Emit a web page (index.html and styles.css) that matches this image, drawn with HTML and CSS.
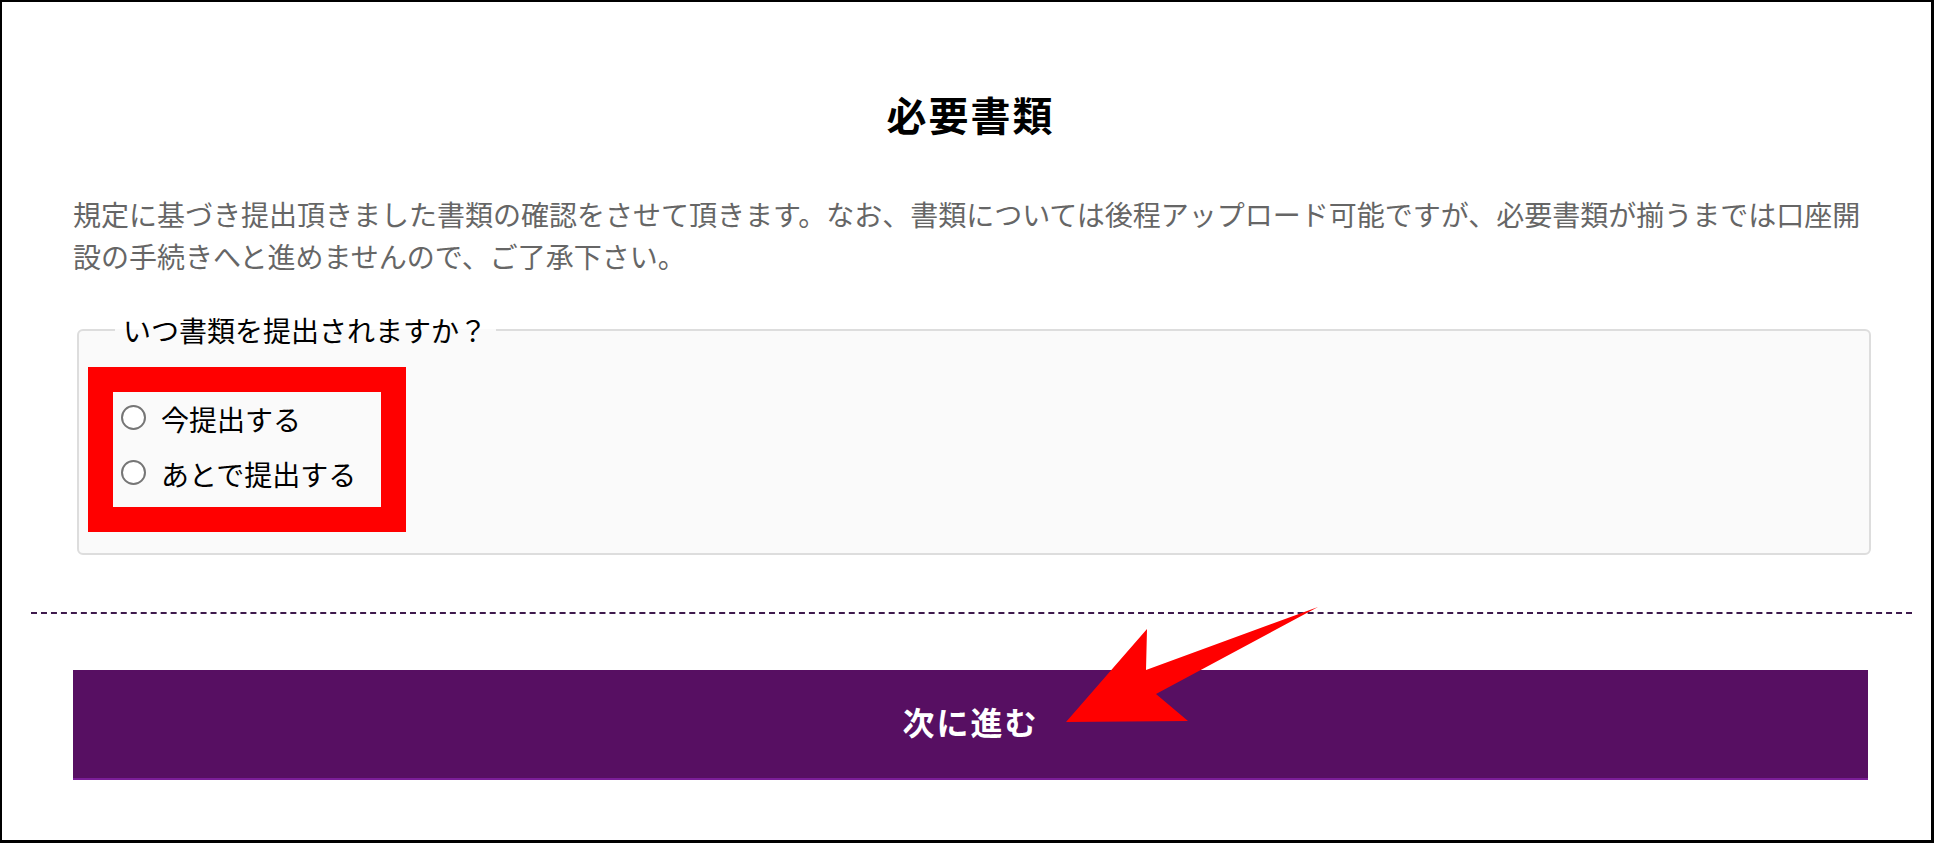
FILE: index.html
```html
<!DOCTYPE html>
<html lang="ja">
<head>
<meta charset="utf-8">
<title>必要書類</title>
<link rel="stylesheet" href="styles.css">
</head>
<body>
<div class="page">
  <h1 class="title">必要書類</h1>
  <p class="lead">規定に基づき提出頂きました書類の確認をさせて頂きます。なお、書類については後程アップロード可能ですが、必要書類が揃うまでは口座開設の手続きへと進めませんので、ご了承下さい。</p>
  <fieldset class="when">
    <legend class="when-legend">いつ書類を提出されますか？</legend>
    <div class="choices">
      <label class="choice"><input type="radio" name="when" class="radio"><span class="choice-text">今提出する</span></label>
      <label class="choice"><input type="radio" name="when" class="radio"><span class="choice-text">あとで提出する</span></label>
    </div>
  </fieldset>
  <hr class="divider">
  <button class="next" type="button">次に進む</button>
  <svg class="arrow" width="262" height="126" viewBox="0 0 262 126" aria-hidden="true">
    <polygon points="6,122 87,29 86,70 258,7 96,94 128,121" fill="#ff0000"/>
  </svg>
</div>
</body>
</html>
```

FILE: styles.css
```css
* { box-sizing: border-box; }

html, body {
  margin: 0;
  padding: 0;
  background: #ffffff;
}

body {
  font-family: "Noto Sans CJK JP", "Noto Sans", sans-serif;
  color: #000;
}

.page {
  position: relative;
  width: 1934px;
  height: 843px;
  border-style: solid;
  border-color: #000;
  border-width: 2px 3px 3px 2px;
  padding: 0 63px 0 71px;
  overflow: hidden;
}

.title {
  margin: 88px 0 0;
  font-size: 40px;
  line-height: 48px;
  font-weight: 700;
  letter-spacing: 2px;
  text-align: center;
  color: #000;
}

.lead {
  margin: 55px 0 0;
  font-size: 28px;
  line-height: 42px;
  color: #666666;
}

.when {
  margin: 32px -3px 0 4px;
  padding: 16px 0 21px 9px;
  border: 2px solid #dddddd;
  border-radius: 6px;
  background: #fafafa;
  min-inline-size: 0;
}

.when-legend {
  margin-left: 27px;
  padding: 0 9px 0 8px;
  font-size: 28px;
  line-height: 42px;
  color: #000;
}

.choices {
  display: inline-flex;
  flex-direction: column;
  gap: 5px;
  border: 25px solid #ff0000;
  padding: 0 25px 10px 8px;
  background: #fafafa;
}

.choice {
  display: flex;
  align-items: center;
  height: 50px;
  gap: 15px;
  font-size: 28px;
  line-height: 42px;
  color: #000;
}

.choice-text {
  padding-top: 4px;
}

.radio {
  appearance: none;
  -webkit-appearance: none;
  margin: 0;
  width: 25px;
  height: 25px;
  border: 2px solid #767676;
  border-radius: 50%;
  background: #ffffff;
  flex: none;
}

.divider {
  margin: 57px -44px 0 -42px;
  height: 0;
  border: 0;
  border-top: 2px dashed #3e1a4d;
}

.next {
  display: block;
  width: 100%;
  margin: 56px 0 0;
  height: 110px;
  border: 0;
  border-bottom: 2px solid #7b1e98;
  background: #570f62;
  color: #ffffff;
  font-family: "Noto Sans CJK JP", "Noto Sans", sans-serif;
  font-size: 32px;
  font-weight: 700;
  letter-spacing: 2px;
  padding: 0 0 6px;
}

.arrow {
  position: absolute;
  left: 1058px;
  top: 598px;
  pointer-events: none;
}
```
